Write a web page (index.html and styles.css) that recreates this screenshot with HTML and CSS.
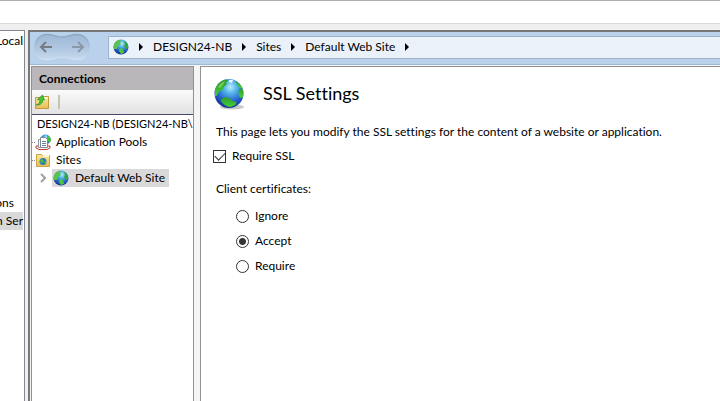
FILE: index.html
```html
<!DOCTYPE html>
<html lang="en">
<head>
<meta charset="utf-8">
<title>SSL Settings</title>
<link rel="stylesheet" href="styles.css">
</head>
<body>
<svg class="defs" aria-hidden="true">
  <defs>
    <radialGradient id="ocean" cx="0.55" cy="0.28" r="0.75">
      <stop offset="0" stop-color="#b5ecff"/>
      <stop offset="0.3" stop-color="#55b2e9"/>
      <stop offset="0.65" stop-color="#2464d0"/>
      <stop offset="1" stop-color="#172a85"/>
    </radialGradient>
    <linearGradient id="land" x1="0" y1="0" x2="0" y2="1">
      <stop offset="0" stop-color="#2f9a2d"/>
      <stop offset="1" stop-color="#45cf36"/>
    </linearGradient>
    <linearGradient id="folder" x1="0" y1="0" x2="0" y2="1">
      <stop offset="0" stop-color="#fbe9a0"/>
      <stop offset="1" stop-color="#e8bd55"/>
    </linearGradient>
    <linearGradient id="well" x1="0" y1="0" x2="0" y2="1">
      <stop offset="0" stop-color="#9db8d6"/>
      <stop offset="0.5" stop-color="#adc5e0"/>
      <stop offset="1" stop-color="#c6d9ee"/>
    </linearGradient>
    <linearGradient id="rim" x1="0" y1="0" x2="0" y2="1">
      <stop offset="0" stop-color="#8ea6c1"/>
      <stop offset="0.5" stop-color="#a9c1dc"/>
      <stop offset="1" stop-color="#cfe0f2"/>
    </linearGradient>
    <symbol id="globe" viewBox="0 0 32 32">
      <ellipse cx="19" cy="29" rx="12" ry="2.5" fill="#777" opacity="0.4"/>
      <circle cx="16" cy="15.500" r="14.500" fill="url(#ocean)"/>
      <path d="M2 13C3 7 7 2.500 13 1.500l2 1-2 2 1 2-3 2-1 3-4 2-2 4-2 1z" fill="url(#land)"/>
      <path d="M7.500 22l4-3 5 1 3 3 4 1-1 3-5 2c-4 0-8-3-10-7z" fill="url(#land)"/>
      <path d="M22 3c3 1 6 4 7.500 7l-3 0-2-3z" fill="url(#land)"/>
      <path d="M26 11l3-1c1.500 3 1.500 6 1 9l-3 1-1.500-4z" fill="url(#land)"/>
      <path d="M16 2h4l-1 3-3-1z" fill="#eaf8ff"/>
      <path d="M5 9c2-3 4-5 7-6l-2 4-3 3z" fill="#a0e070" opacity="0.6"/>
    </symbol>
    <symbol id="globe-small" viewBox="0 0 16 16">
      <circle cx="8" cy="8" r="7.500" fill="url(#ocean)"/>
      <path d="M1 10C0 6 2 2 6 1l2 1-1 2 1 1-3 2-1 3z" fill="#58c44a"/>
      <path d="M6 12l1-3 3 1 1 4-3 1z" fill="#4cc640"/>
      <path d="M11 2c3 1 4.500 4 4 7l-2 1-2-3 1-2z" fill="#37a835"/>
    </symbol>
  </defs>
</svg>

<div class="top-strip"></div>
<div class="workspace">
  <aside class="outer-tree">
    <div class="outer-item outer-local">Local</div>
    <div class="outer-item outer-sections">ons</div>
    <div class="outer-item outer-selected">n Ser</div>
  </aside>

  <div class="window">
    <header class="nav-bar">
      <div class="history">
        <svg class="history-well" viewBox="0 0 56 28" aria-hidden="true">
          <path d="M13 1.500C20 1.500 21 4 28 4s8-2.500 15-2.500S55 7 55 14 50 26.500 43 26.500 35 24 28 24s-8 2.500-15 2.500S1 21 1 14 6 1.500 13 1.500z" fill="url(#well)" stroke="url(#rim)" stroke-width="1.500"/>
        </svg>
        <button class="history-button back" type="button" aria-label="Back">
          <svg viewBox="0 0 14 12" aria-hidden="true"><path d="M13 6H2M7 1L2 6l5 5"/></svg>
        </button>
        <button class="history-button forward" type="button" aria-label="Forward">
          <svg viewBox="0 0 14 12" aria-hidden="true"><path d="M1 6h11M7 1l5 5-5 5"/></svg>
        </button>
      </div>
      <nav class="address" aria-label="Location">
        <svg class="icon"><use href="#globe-small"/></svg>
        <svg class="crumb-arrow" viewBox="0 0 4 8"><path d="M0 0l4 4-4 4z"/></svg>
        <a href="#server">DESIGN24-NB</a>
        <svg class="crumb-arrow" viewBox="0 0 4 8"><path d="M0 0l4 4-4 4z"/></svg>
        <a href="#sites">Sites</a>
        <svg class="crumb-arrow" viewBox="0 0 4 8"><path d="M0 0l4 4-4 4z"/></svg>
        <a href="#default">Default Web Site</a>
        <svg class="crumb-arrow" viewBox="0 0 4 8"><path d="M0 0l4 4-4 4z"/></svg>
      </nav>
    </header>

    <div class="panes">
      <section class="connections">
        <h2>Connections</h2>
        <div class="toolbar">
          <button class="tool" type="button" aria-label="Up">
            <svg class="icon" viewBox="0 0 16 16">
              <path d="M1.500 3.500h5l1-1h7v12h-13z" fill="url(#folder)" stroke="#c39a40"/>
              <path d="M10 3h4v2h-4z" fill="#fff6cf"/>
              <path d="M2 11c3-1 4-2 4-5L3.500 5.500 8.500 1l2 5-1.500-.5C9 9 6 11.500 2 11z" fill="#48c63c" stroke="#2c8c2a" stroke-width="0.700"/>
            </svg>
          </button>
          <span class="separator"></span>
        </div>
        <ul class="tree">
          <li class="server">DESIGN24-NB (DESIGN24-NB\</li>
          <li>
            <span class="dots"></span>
            <svg class="icon" viewBox="0 0 16 16">
              <circle cx="10.500" cy="5.500" r="5" fill="url(#ocean)"/>
              <path d="M12 1c3 1 4 3 4 6l-2 2-2-3z" fill="#48bd3c"/>
              <path d="M1 12v2l3 1.500h8l3-1.500v-2z" fill="#fff" stroke="#c43a31"/>
              <path d="M3.500 5.500h6v8h-6z" fill="#fff" stroke="#8f979f"/>
              <path d="M5.500 3.500h5l2 2v8h-7z" fill="#fff" stroke="#7d8790"/>
              <path d="M7 7.500h4M7 9.500h4M7 11.500h4" stroke="#66809c"/>
            </svg>
            <span>Application Pools</span>
          </li>
          <li>
            <span class="dots"></span>
            <svg class="icon" viewBox="0 0 16 16">
              <path d="M1.500 2.500h5l1 1h7v11h-13z" fill="url(#folder)" stroke="#c9a248"/>
              <path d="M8 3h6v2H8z" fill="#fff6cf"/>
              <circle cx="8" cy="9.500" r="3.500" fill="#2874c9"/>
              <path d="M5 8l3-1 1 2-3 3zM9 10l2-1v2l-2 1z" fill="#43bd39"/>
            </svg>
            <span>Sites</span>
          </li>
          <li class="site">
            <button class="expander" type="button" aria-label="Expand">
              <svg viewBox="0 0 6 10"><path d="M1 1l4 4-4 4"/></svg>
            </button>
            <a class="selected" href="#default"><svg class="icon"><use href="#globe-small"/></svg><span>Default Web Site</span></a>
          </li>
        </ul>
      </section>

      <main class="settings">
        <div class="title-row">
          <svg class="title-icon"><use href="#globe"/></svg>
          <h1>SSL Settings</h1>
        </div>
        <p class="intro">This page lets you modify the SSL settings for the content of a website or application.</p>
        <label class="choice require-ssl"><input type="checkbox" checked>Require SSL</label>
        <fieldset>
          <legend>Client certificates:</legend>
          <label class="choice"><input type="radio" name="certs">Ignore</label>
          <label class="choice"><input type="radio" name="certs" checked>Accept</label>
          <label class="choice"><input type="radio" name="certs">Require</label>
        </fieldset>
      </main>
    </div>
  </div>
</div>
</body>
</html>
```
FILE: styles.css
```css
* {
  box-sizing: border-box;
}

body {
  margin: 0;
  height: 100vh;
  display: flex;
  flex-direction: column;
  overflow: hidden;
  background: #efefef;
  color: #000;
  font: 12px/18px Lato, "Open Sans", sans-serif;
  font-variant-ligatures: none;
  white-space: nowrap;
}

button {
  padding: 0;
  border: 0;
  background: none;
}

a {
  color: inherit;
  text-decoration: none;
}

.defs {
  position: absolute;
  width: 0;
  height: 0;
}

.icon {
  flex: none;
  width: 16px;
  height: 16px;
}

.top-strip {
  flex: none;
  height: 24px;
  border-top: 1px solid #aeaeae;
  border-bottom: 1px solid #d9d9d9;
  background: #fff;
}

.workspace {
  flex: 1;
  display: flex;
  gap: 3px;
  min-height: 0;
  padding-top: 6px;
}

.outer-tree {
  flex: none;
  width: 25px;
  border-top: 1px solid #828790;
  border-right: 1px solid #828790;
  background: #fff;
  overflow: hidden;
}

.outer-item {
  display: flex;
  justify-content: flex-end;
  height: 18px;
  margin-right: 1px;
}

.outer-local {
  margin-top: 1px;
}

.outer-sections {
  margin-top: 144px;
  padding-right: 9px;
}

.outer-selected {
  background: #d9d9d9;
}

.window {
  flex: 1;
  min-width: 0;
  display: flex;
  flex-direction: column;
  border: 2px solid #777;
  border-right: 0;
  border-bottom: 0;
  background: #f5f5f5;
}

.nav-bar {
  flex: none;
  display: flex;
  align-items: center;
  gap: 18px;
  height: 33px;
  padding: 0 0 2px 4px;
  border-bottom: 1px solid #9db9d7;
  background: #b9d1ea;
}

.history {
  position: relative;
  display: flex;
  align-items: center;
  justify-content: space-between;
  width: 56px;
  height: 28px;
  padding: 0 5px;
}

.history-well {
  position: absolute;
  inset: 0;
}

.history-button {
  position: relative;
  width: 14px;
  height: 12px;
}

.history-button svg {
  display: block;
  fill: none;
  stroke: #777c82;
  stroke-width: 2;
}

.forward svg {
  stroke: #8b98a7;
}

.address {
  flex: 1;
  display: flex;
  align-items: center;
  gap: 10px;
  height: 23px;
  padding-left: 4px;
  border: 1px solid #9bb3cc;
  border-right: 0;
  background: #eaf1f9;
}

.crumb-arrow {
  flex: none;
  width: 4px;
  height: 8px;
}

.panes {
  flex: 1;
  display: flex;
  gap: 6px;
  min-height: 0;
  padding: 1px 0 0 1px;
}

.connections {
  flex: none;
  width: 163px;
  border: 1px solid #919191;
  border-bottom: 0;
  background: #fff;
  overflow: hidden;
}

h2 {
  margin: 0;
  padding: 0 7px;
  background: #bab7ba;
  font-size: 12px;
  line-height: 23px;
}

.toolbar {
  display: flex;
  align-items: center;
  gap: 8px;
  height: 25px;
  padding-left: 2px;
  border-bottom: 1px solid #49476e;
  background: linear-gradient(#fafafa, #e2e2e2);
}

.tool {
  display: flex;
}

.separator {
  width: 2px;
  height: 14px;
  background: #c5c5b5;
}

.tree {
  margin: 0;
  padding: 0;
  list-style: none;
}

.tree li {
  display: flex;
  align-items: center;
  gap: 5px;
  height: 18px;
}

.tree .server {
  padding-left: 5px;
  font-size: 11px;
}

.dots {
  width: 3px;
  margin-right: -5px;
  border-bottom: 1px dotted #888;
}

.tree .site {
  gap: 6px;
  padding-left: 8px;
}

.expander {
  width: 6px;
  height: 10px;
}

.expander svg {
  display: block;
  fill: none;
  stroke: #a0a0a0;
  stroke-width: 2;
}

.selected {
  display: flex;
  align-items: center;
  gap: 6px;
  padding: 0 4px 0 1px;
  background: #d9d9d9;
}

.settings {
  flex: 1;
  min-width: 0;
  padding: 11px 12px;
  border: 1px solid #919191;
  border-right: 0;
  border-bottom: 0;
  background: #fff;
}

.title-row {
  display: flex;
  align-items: center;
  gap: 18px;
}

.title-icon {
  width: 32px;
  height: 32px;
}

h1 {
  margin: 0 0 2px;
  font-size: 18px;
  font-weight: 400;
  line-height: 24px;
}

.intro {
  margin: 13px 0 6px;
  padding-left: 3px;
}

.choice {
  display: flex;
  align-items: center;
  gap: 6px;
}

input {
  appearance: none;
  flex: none;
  width: 13px;
  height: 13px;
  margin: 0;
  border: 1px solid #333;
  background: #fff;
}

.require-ssl {
  position: relative;
}

.require-ssl:has(:checked)::after {
  content: "";
  position: absolute;
  left: 2px;
  top: 5px;
  width: 9px;
  height: 5px;
  border: solid #333;
  border-width: 0 0 1px 1px;
  rotate: -45deg;
}

input[type="radio"] {
  border-radius: 50%;
}

input[type="radio"]:checked {
  background: radial-gradient(circle, #333 3px, #fff 4px);
}

fieldset {
  display: grid;
  gap: 7px;
  margin: 15px 0 0;
  padding: 9px 0 0 23px;
  border: 0;
}

legend {
  margin-left: -20px;
  padding: 0;
}
```
